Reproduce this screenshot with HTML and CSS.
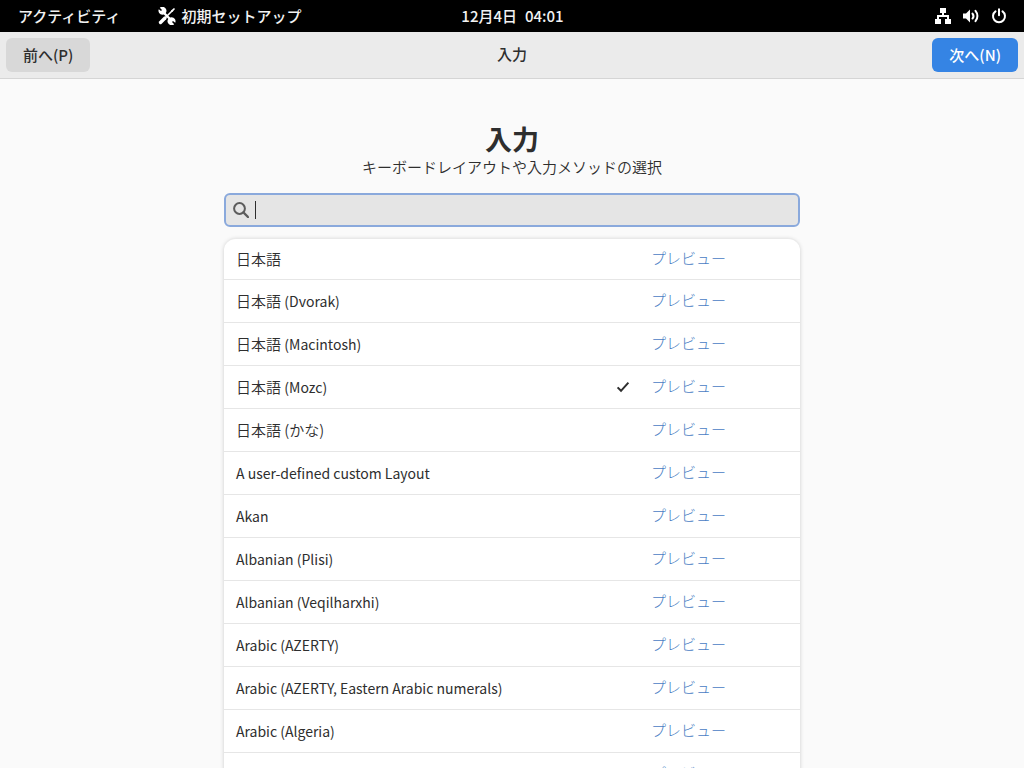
FILE: index.html
```html
<!DOCTYPE html>
<html lang="ja">
<head>
    <meta charset="UTF-8">
    <meta name="viewport" content="width=device-width, initial-scale=1.0">
    <title>初期セットアップ</title>
    <link rel="stylesheet" href="styles.css">
</head>
<body>
<div class="topbar">
    <div class="topbar-left">
        <button type="button" class="topbar-item">アクティビティ</button>
        <button type="button" class="topbar-item">
            <svg width="18" height="18" viewBox="0 0 18 18" aria-hidden="true">
                <path d="M4 4 L14 14" fill="none" stroke="#fff" stroke-width="2.4"/>
                <path d="M1.8 0.8 A4 4 0 1 1 0.8 2.2 L3 4 L4 3 Z" fill="#fff"/>
                <path d="M16.2 17.2 A4 4 0 1 1 17.2 15.8 L15 14 L14 15 Z" fill="#fff"/>
                <path d="M2.5 15.5 L7 11" fill="none" stroke="#fff" stroke-width="3.4" stroke-linecap="round"/>
                <path d="M7 11 L14.5 3.5" fill="none" stroke="#fff" stroke-width="1.6"/>
                <path d="M13 3.6 L16 1 L17 2 L14.4 5 Z" fill="#fff"/>
            </svg>
            初期セットアップ
        </button>
    </div>
    <button type="button" class="topbar-item clock"><span>12月4日</span><span>04:01</span></button>
    <button type="button" class="topbar-item status" aria-label="システム">
        <svg width="16" height="16" viewBox="0 0 16 16" aria-hidden="true">
            <path d="M5 0h6v5H9v2h5v4h2v5h-6v-5h2V9H4v2h2v5H0v-5h2V7h5V5H5z" fill="#fff"/>
        </svg>
        <svg width="16" height="16" viewBox="0 0 16 16" aria-hidden="true">
            <path d="M0 5.5h3L7 1.5v13l-4-4H0z" fill="#fff"/>
            <path d="M9.5 5.5a4 4 0 0 1 0 5" fill="none" stroke="#fff" stroke-width="2" stroke-linecap="round"/>
            <path d="M12.5 2.8a8 8 0 0 1 0 10.4" fill="none" stroke="#fff" stroke-width="2" stroke-linecap="round"/>
        </svg>
        <svg width="16" height="16" viewBox="0 0 16 16" aria-hidden="true">
            <path d="M4.5 3.4a6 6 0 1 0 7 0M8 1.2v6" fill="none" stroke="#fff" stroke-width="2" stroke-linecap="round"/>
        </svg>
    </button>
</div>

<header class="headerbar">
    <button type="button" class="btn">前へ(P)</button>
    <span class="headerbar-title">入力</span>
    <button type="button" class="btn btn-next">次へ(N)</button>
</header>

<main class="content">
    <h1>入力</h1>
    <p class="subtitle">キーボードレイアウトや入力メソッドの選択</p>

    <label class="search">
        <svg width="16" height="16" viewBox="0 0 16 16" aria-hidden="true">
            <circle cx="6.5" cy="6.5" r="5.4" fill="none" stroke="#5c5c5c" stroke-width="2"/>
            <path d="M10.5 10.5 L15 15" stroke="#5c5c5c" stroke-width="2.4" stroke-linecap="round"/>
        </svg>
        <span class="caret"></span>
        <input type="text" aria-label="検索">
    </label>

    <ul class="layouts">
        <li><span class="name">日本語</span><a href="#">プレビュー</a></li>
        <li><span class="name">日本語 <span class="latin">(Dvorak)</span></span><a href="#">プレビュー</a></li>
        <li><span class="name">日本語 <span class="latin">(Macintosh)</span></span><a href="#">プレビュー</a></li>
        <li>
            <span class="name">日本語 <span class="latin">(Mozc)</span></span>
            <svg class="check" width="16" height="16" viewBox="0 0 16 16" aria-hidden="true">
                <path d="M2.6 8.4 L6 11.8 L13.4 3.6" fill="none" stroke="#2e2e2e" stroke-width="2"/>
            </svg>
            <a href="#">プレビュー</a>
        </li>
        <li><span class="name">日本語 (かな)</span><a href="#">プレビュー</a></li>
        <li><span class="name latin">A user-defined custom Layout</span><a href="#">プレビュー</a></li>
        <li><span class="name latin">Akan</span><a href="#">プレビュー</a></li>
        <li><span class="name latin">Albanian (Plisi)</span><a href="#">プレビュー</a></li>
        <li><span class="name latin">Albanian (Veqilharxhi)</span><a href="#">プレビュー</a></li>
        <li><span class="name latin">Arabic (AZERTY)</span><a href="#">プレビュー</a></li>
        <li><span class="name latin">Arabic (AZERTY, Eastern Arabic numerals)</span><a href="#">プレビュー</a></li>
        <li><span class="name latin">Arabic (Algeria)</span><a href="#">プレビュー</a></li>
        <li><span class="name"></span><a href="#">プレビュー</a></li>
    </ul>
</main>
</body>
</html>
```
FILE: styles.css
```css
* {
    box-sizing: border-box;
}

body {
    margin: 0;
    height: 100vh;
    overflow: hidden;
    display: flex;
    flex-direction: column;
    background-color: #fafafa;
    color: #2e2e2e;
    font-family: "Noto Sans CJK JP", sans-serif;
    font-size: 15px;
    line-height: 22px;
}

button {
    font: inherit;
    border: none;
    cursor: pointer;
}

.topbar {
    flex: none;
    display: grid;
    grid-template-columns: 1fr auto 1fr;
    height: 32px;
    padding: 0 17px 1px 18px;
    background-color: #000;
}

.topbar-left {
    display: flex;
    gap: 38px;
}

.topbar-item {
    display: flex;
    align-items: center;
    gap: 5px;
    padding: 0;
    background: none;
    color: #f2f2f2;
    font-weight: 500;
}

.clock {
    gap: 8px;
}

.status {
    justify-self: end;
    gap: 12px;
}

.headerbar {
    flex: none;
    display: grid;
    grid-template-columns: 1fr auto 1fr;
    align-items: center;
    height: 47px;
    padding: 0 6px;
    background-color: #ebebeb;
    border-bottom: 1px solid #d5d5d5;
    font-weight: 500;
}

.headerbar-title {
    padding-bottom: 2px;
}

.btn {
    justify-self: start;
    height: 34px;
    padding: 0 17px;
    border-radius: 6px;
    background-color: #d8d8d8;
    color: #2e2e2e;
}

.btn-next {
    justify-self: end;
    background-color: #3584e4;
    color: #fff;
}

.content {
    width: 100%;
    max-width: 576px;
    margin: 0 auto;
    padding-top: 42px;
}

h1 {
    margin: 0;
    font-size: 27px;
    line-height: 35px;
    text-align: center;
}

.subtitle {
    margin: 0 0 15px;
    font-weight: 350;
    text-align: center;
}

.search {
    display: flex;
    align-items: center;
    height: 34px;
    padding: 0 7px;
    border: 2px solid #8aa9dc;
    border-radius: 6px;
    background-color: #e5e5e5;
}

.caret {
    width: 1px;
    height: 18px;
    margin-left: 6px;
    background-color: #2e2e2e;
}

.search input {
    flex: 1;
    min-width: 0;
    padding: 0;
    border: none;
    outline: none;
    background: none;
    font: inherit;
    caret-color: transparent;
}

.layouts {
    margin: 11px 0 0;
    padding: 0;
    list-style: none;
    background-color: #fff;
    border-top: 1px solid #e9e9e9;
    border-radius: 12px 12px 0 0;
    box-shadow: 0 1px 4px rgba(0, 0, 0, 0.18);
}

.layouts li {
    display: flex;
    align-items: center;
    height: 43px;
    padding: 0 74px 0 12px;
    border-bottom: 1px solid #e6e6e6;
    font-weight: 350;
}

.layouts li:first-child {
    height: 41px;
}

.name {
    flex: 1;
}

.latin {
    font-size: 14px;
    font-weight: 400;
}

.check {
    margin-right: 20px;
}

.layouts a {
    padding-bottom: 2px;
    color: #4a80c4;
    font-weight: 300;
    text-decoration: none;
}
```
